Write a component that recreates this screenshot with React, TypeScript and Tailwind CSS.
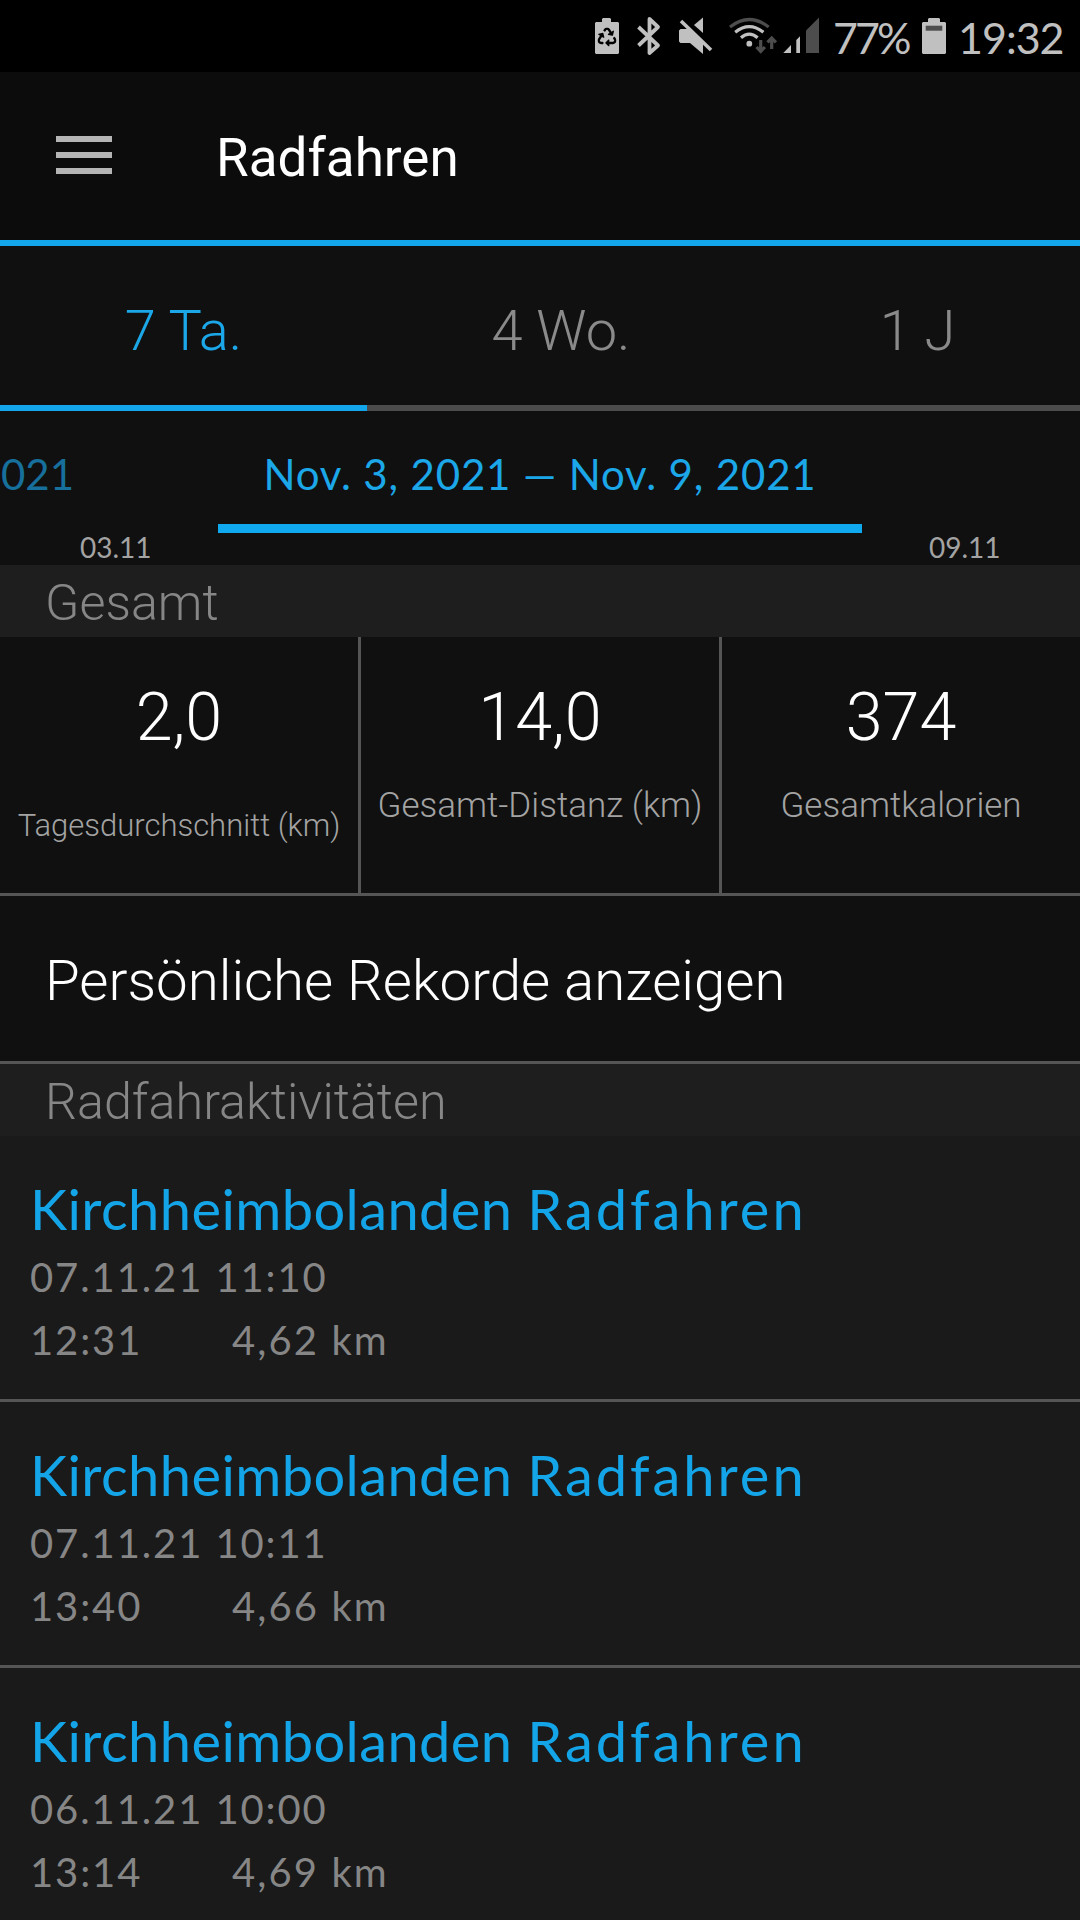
import React from 'react';
import { FaRecycle } from 'react-icons/fa';

const activities = [
  { place: 'Kirchheimbolanden', date: '07.11.21 11:10', duration: '12:31', distance: '4,62 km' },
  { place: 'Kirchheimbolanden', date: '07.11.21 10:11', duration: '13:40', distance: '4,66 km' },
  { place: 'Kirchheimbolanden', date: '06.11.21 10:00', duration: '13:14', distance: '4,69 km' },
];

const StatusIcons = () => (
  <svg width="230" height="72" viewBox="590 0 230 72" fill="#c0c0c0" className="shrink-0">
    {/* Battery saver */}
    <path d="M596 22h6v-3l1-1h7l1 1v3h7l1 1v30l-1 1h-22l-1-1V23z" />
    <FaRecycle x="597.5" y="27.5" size={19} color="#000" />
    {/* Bluetooth */}
    <path d="M638.5 27L658 45.5 649.5 53V19L658 27 638.5 45.5" fill="none" stroke="#c0c0c0" strokeWidth="3.8" strokeLinejoin="round" />
    {/* Muted speaker */}
    <path d="M680.5 29H688L703 43.5V54L690 43H680.5L679 41.5V30.5z" />
    <path d="M694 25L703 17.5V33z" />
    <path d="M681 21L711 50" stroke="#c0c0c0" strokeWidth="3.6" />
    {/* Wifi */}
    <g fill="none" strokeWidth="3.2">
      <path d="M730 27Q749.3 12 768.7 27" stroke="#4d4d4d" />
      <path d="M735.2 32.2Q749.3 21 763.4 32.2" stroke="#c0c0c0" />
      <path d="M741 37.8Q749.3 30.5 757.6 37.8" stroke="#c0c0c0" />
      <path d="M760.7 40v11M756.5 47l4.2 4.4 4.2-4.4M771.7 49V38M767.5 42.4l4.2-4.4 4.2 4.4" stroke="#4d4d4d" />
    </g>
    <circle cx="749.3" cy="43.7" r="2.9" />
    {/* Signal strength */}
    <path d="M783.3 53L791 45v8zM796.3 53V40l3.7-3.7V53z" />
    <path d="M806 53V30.5l13-13V53z" fill="#4d4d4d" />
  </svg>
);

const BatteryIcon = () => (
  <svg width="24" height="72" viewBox="0 0 24 72" className="ml-[13px] shrink-0">
    <path d="M1 22h5v-3l1-1h10l1 1v3h5l1 1v30l-1 1H1l-1-1V23z" fill="#c0c0c0" />
    <path d="M3.7 25.7H20.3v5H3.7z" fill="#4d4d4d" />
  </svg>
);

const Stat = ({ value, label, small }: { value: string; label: string; small?: boolean }) => (
  <div className="flex flex-col items-center pt-[41px]">
    <div className="text-[66.5px] leading-[78px] font-light text-white">{value}</div>
    {small ? (
      <div className="mt-[51px] text-[31px] leading-[38px] font-light whitespace-nowrap text-[#a3a3a3]">{label}</div>
    ) : (
      <div className="mt-[29px] text-[35px] leading-[42px] font-light whitespace-nowrap text-[#a3a3a3]">{label}</div>
    )}
  </div>
);

const SectionTitle = ({ children }: { children: React.ReactNode }) => (
  <div className="h-[72px] bg-[#1e1e1e] pl-[45px] pt-[8px] text-[50.3px] leading-[60px] font-light text-[#868686]">
    {children}
  </div>
);

const App = () => {
  return (
    <div className="w-[1080px] h-[1920px] overflow-hidden bg-[#101010] font-['Roboto',sans-serif]">
      <div className="h-[72px] bg-black flex pl-[590px] font-['Lato',sans-serif] text-[43px] leading-[75px] text-[#c0c0c0]">
        <StatusIcons />
        <span className="ml-[13px] w-[76px] tracking-[-3px] whitespace-nowrap">77%</span>
        <BatteryIcon />
        <span className="ml-[12px] tracking-[-1px]">19:32</span>
      </div>

      <header className="h-[174px] border-b-[6px] border-[#14a6ea] bg-[#0c0c0c] flex items-start">
        <div className="mt-16 ml-14 w-14 flex flex-col gap-[10px]">
          <span className="h-[6px] bg-[#b5b5b5]"></span>
          <span className="h-[6px] bg-[#b5b5b5]"></span>
          <span className="h-[6px] bg-[#b5b5b5]"></span>
        </div>
        <h1 className="ml-[104px] text-[53px] leading-[172px] text-white">Radfahren</h1>
      </header>

      <nav className="grid grid-cols-[367px_386px_327px] text-center text-[56px] leading-[171px] font-light text-[#8a8a8a]">
        <div className="h-[165px] border-b-[6px] border-[#14a6ea] text-[#1ba7e8]">7 Ta.</div>
        <div className="h-[165px] border-b-[6px] border-[#4b4b4b] pl-[2px]">4 Wo.</div>
        <div className="h-[165px] border-b-[6px] border-[#4b4b4b] pl-[2px]">1 J</div>
      </nav>

      <div className="h-[154px] grid grid-cols-[218px_644px_218px] font-['Lato',sans-serif]">
        <div>
          <div className="h-[119px] pt-[40px] pl-px text-[42px] leading-[46px] text-[#176f9b]">021</div>
          <div className="pl-[80px] text-[28px] leading-[34px] text-[#a3a3a3]">03.11</div>
        </div>
        <div className="h-[122px] border-b-[9px] border-[#10a8ef] pt-[40px] text-center text-[42px] leading-[46px] tracking-[0.85px] whitespace-nowrap text-[#1ba7e8]">
          Nov. 3, 2021 — Nov. 9, 2021
        </div>
        <div className="pt-[119px] pl-[67px] text-[28px] leading-[34px] text-[#a3a3a3]">09.11</div>
      </div>

      <SectionTitle>Gesamt</SectionTitle>
      <div className="h-[259px] grid grid-cols-[361px_361px_358px] border-b-[3px] border-[#555]">
        <div className="border-r-[3px] border-[#555]"><Stat value="2,0" label="Tagesdurchschnitt (km)" small /></div>
        <div className="border-r-[3px] border-[#555]"><Stat value="14,0" label="Gesamt-Distanz (km)" /></div>
        <Stat value="374" label="Gesamtkalorien" />
      </div>

      <div className="h-[168px] border-b-[3px] border-[#555] pl-[45px] pt-[52px] text-[56.4px] leading-[67px] font-light text-white">
        Persönliche Rekorde anzeigen
      </div>

      <SectionTitle>Radfahraktivitäten</SectionTitle>
      {activities.map((item, i) => (
        <div
          key={i}
          className="h-[266px] border-b-[3px] border-[#555] bg-[#1a1a1a] pl-[30px] pt-[43px] font-['Lato',sans-serif] text-[40px] leading-[63px] tracking-[1.9px] text-[#868686]"
        >
          <div className="mb-[7px] text-[56px] leading-[60px] tracking-[0.4px] whitespace-nowrap text-[#14a4e8]">
            {item.place} <span className="tracking-[3px]">Radfahren</span>
          </div>
          <div>{item.date}</div>
          <div className="flex">
            <span className="w-[202px]">{item.duration}</span>
            <span className="tracking-[2.1px]">{item.distance}</span>
          </div>
        </div>
      ))}
    </div>
  );
};

export default App;
